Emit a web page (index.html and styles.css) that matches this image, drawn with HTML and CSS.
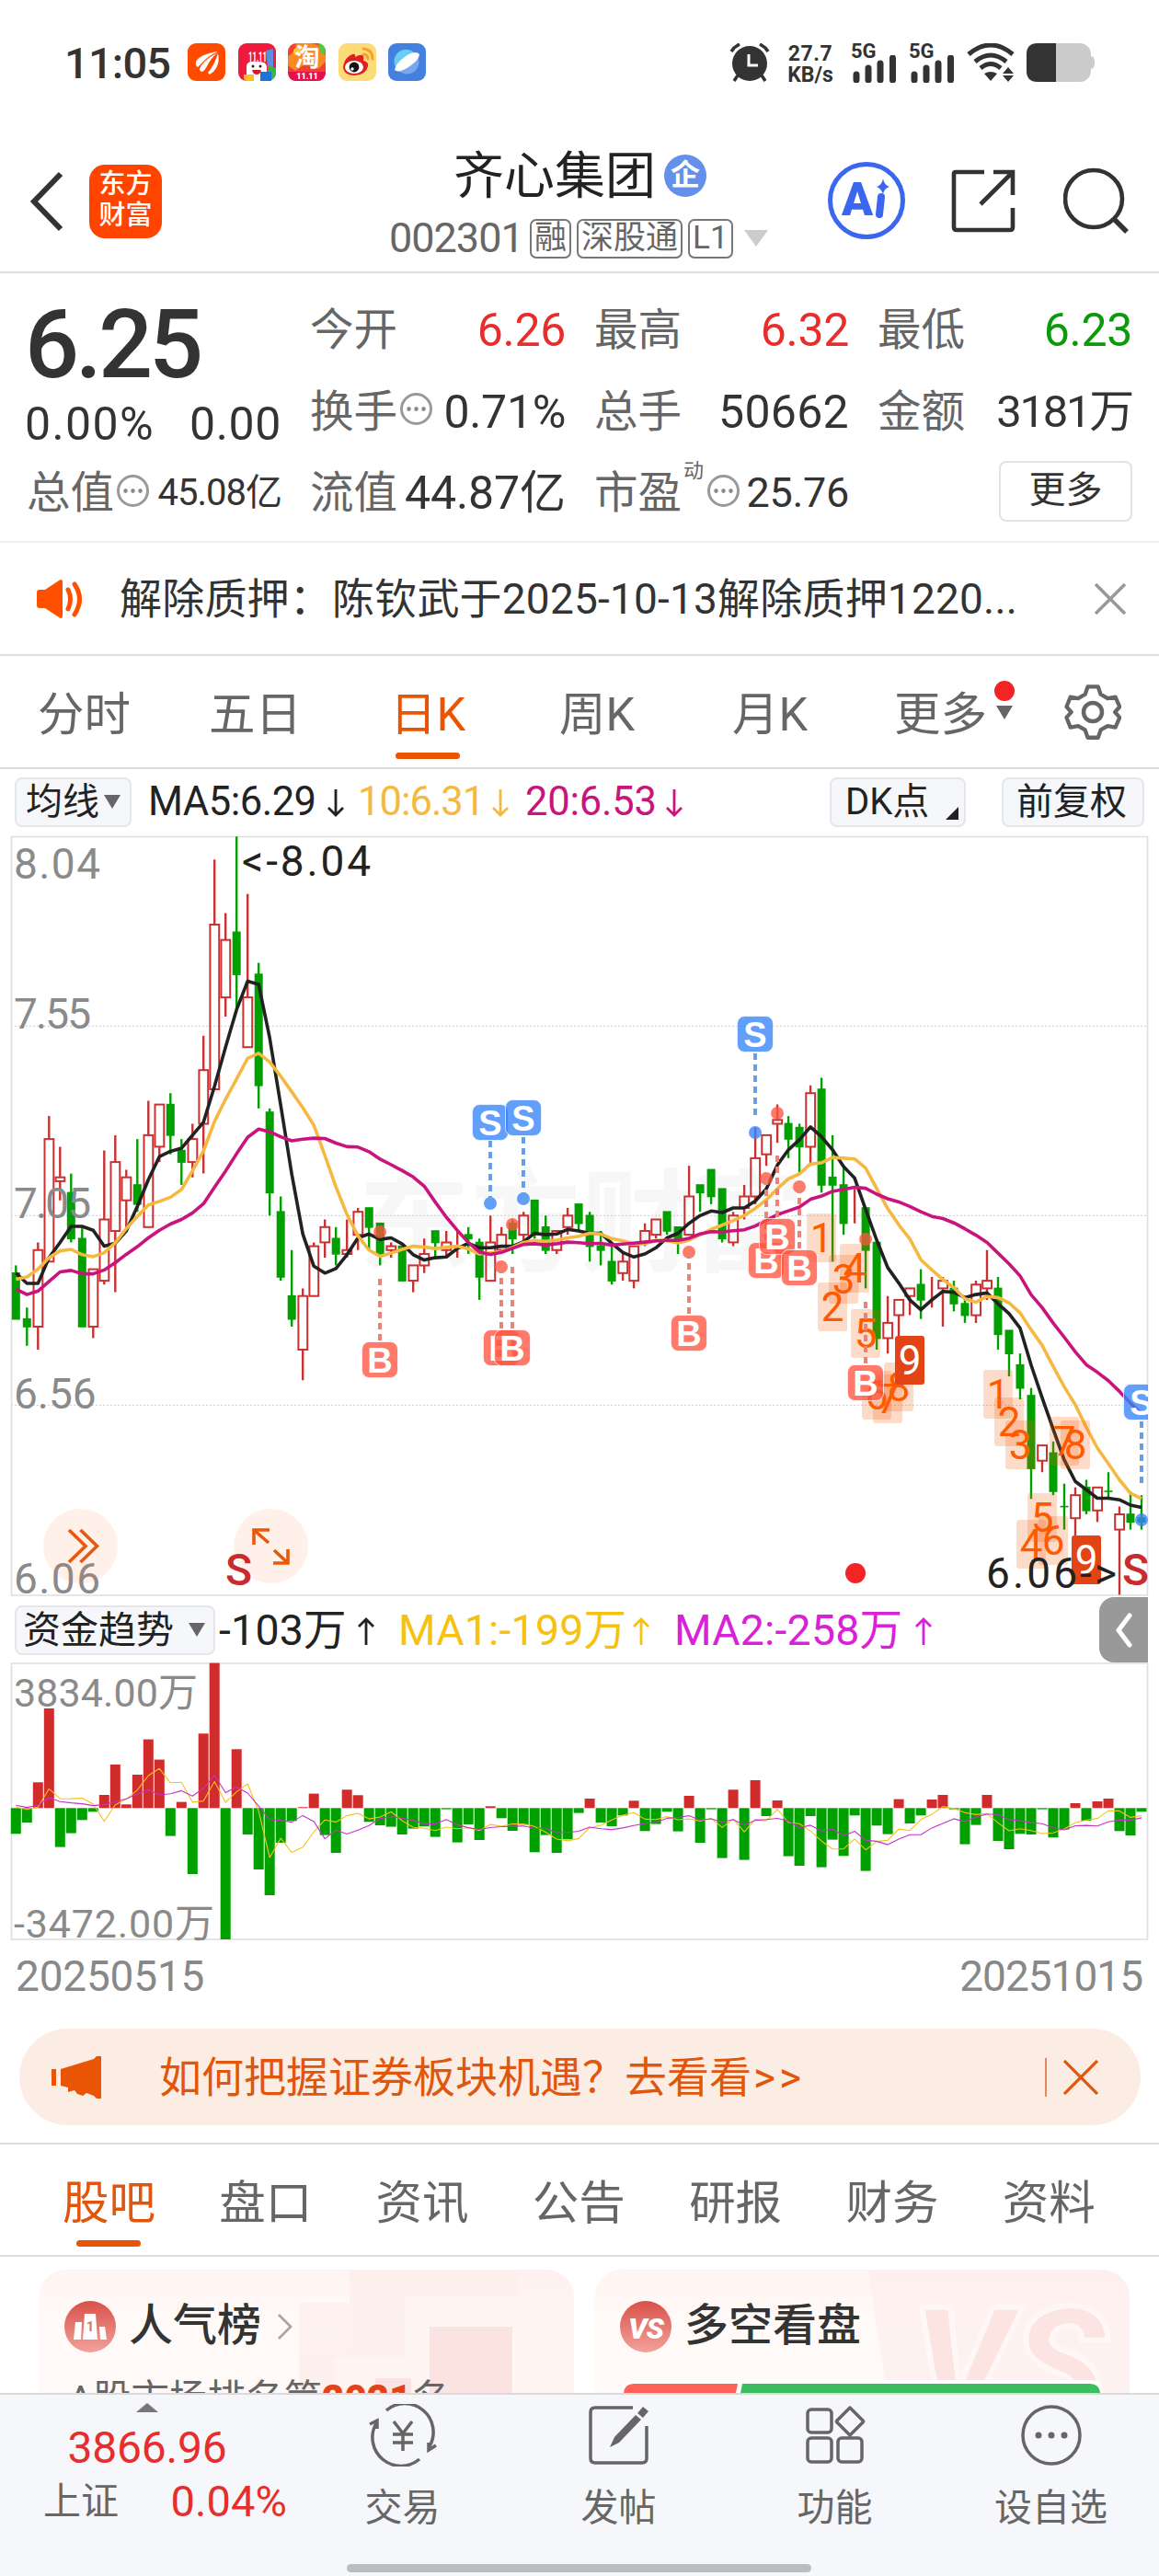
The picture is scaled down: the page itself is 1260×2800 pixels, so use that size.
FILE: index.html
```
<!DOCTYPE html>
<html lang="zh-CN">
<head>
<meta charset="utf-8">
<title>齐心集团 002301</title>
<link rel="stylesheet" href="styles.css">
</head>
<body>
<div class="screen">

  <div class="status">
    <span class="clock">11:05</span>
    <div class="apps">
      <svg viewBox="0 0 41 41"><rect width="41" height="41" rx="9" fill="#ff4a00"/><path d="M9 20Q13 12 33 9Q22 14 17 20Q14 23 11 26Q8 24 9 20ZM13 28Q16 19 32 10.500Q24 18 21 25Q19 29 16 31Q13 31 13 28ZM22 32Q29 24 33 11Q35 20 31 27Q28 32 24 34Z" fill="#fff"/></svg>
      <svg viewBox="0 0 41 41"><rect width="41" height="41" rx="9" fill="#ee1c3c"/><path d="M30 8L38 6V30L32 26Z" fill="#5b8de0"/><path d="M33 24L41 27V33Q40 39 34 41H30Z" fill="#38b54a"/><path d="M9 25Q9 19 20 20Q31 19 31 26V41H9Z" fill="#fff"/><circle cx="16" cy="25" r="1.500" fill="#222"/><circle cx="24" cy="25" r="1.500" fill="#222"/><path d="M15 29H25Q24 34 20 34Q16 34 15 29Z" fill="#d41c2c"/><path d="M6 34H17V41H9Q6 40 6 37Z" fill="#ffbf1a"/><rect x="24" y="31" width="12" height="10" fill="#1f72d8"/><text x="21" y="20" text-anchor="middle" class="tiny" textLength="20" lengthAdjust="spacingAndGlyphs">11.11</text></svg>
      <svg viewBox="0 0 41 41"><rect width="41" height="41" rx="9" fill="#f3402f"/><path d="M0 14Q8 10 9 0H26Q38 2 41 14V20L33 28L20 22L8 30L0 24Z" fill="#f98a1f"/><circle cx="10" cy="9" r="4" fill="#ffc93c"/><path d="M33 0Q41 1 41 10L36 12Z" fill="#55c840"/><path d="M0 31H41V32Q40 41 32 41H9Q1 41 0 32Z" fill="#e8104c"/><text x="21" y="25" text-anchor="middle" class="tao">淘</text><text x="21" y="39" text-anchor="middle" class="eleven">11.11</text></svg>
      <svg viewBox="0 0 41 41"><rect width="41" height="41" rx="9" fill="#fcdc78"/><path d="M5 25Q7 15 15 12Q19 11 18 15Q25 11 27 14Q28 16 27 19Q33 20 32 25Q30 34 18 35Q5 35 5 25Z" fill="#e01f22"/><ellipse cx="17" cy="26" rx="10" ry="7" fill="#fff"/><circle cx="17" cy="26" r="5.400" fill="#111"/><circle cx="15" cy="28" r="1.700" fill="#fff"/><path d="M27 6Q37 7 37 17M27 12Q32 12 32 17" fill="none" stroke="#f5a033" stroke-width="3" stroke-linecap="round"/></svg>
      <svg viewBox="0 0 41 41"><rect width="41" height="41" rx="9" fill="#4480de"/><circle cx="20.500" cy="20.500" r="13" fill="#7aa6ea"/><path d="M8 26A13 13 0 0 1 28 10Z" fill="#68cdf2"/><path d="M7 29Q8 22 19 14Q30 7 34 12Q34 18 22 26Q11 33 7 29Z" fill="#fff"/></svg>
    </div>
    <svg class="alarm" viewBox="0 0 44 42"><path d="M2 9Q5 4 11 1M42 9Q39 4 33 1M9 35L5 41M35 35L39 41" fill="none" stroke="#333" stroke-width="3.500"/><circle cx="22" cy="22" r="19" fill="#333"/><path d="M21 12V24H31" fill="none" stroke="#fff" stroke-width="3"/></svg>
    <div class="speed"><span>27.7</span><span>KB/s</span></div>
    <div class="cell"><span>5G</span><svg viewBox="0 0 48 30"><path d="M4 21V27M17 14V27M30 9V27M43.500 3V27" stroke="#333" stroke-width="7" stroke-linecap="round"/></svg></div>
    <div class="cell second"><span>5G</span><svg viewBox="0 0 48 30"><path d="M4 21V27M17 14V27M30 9V27M43.500 3V27" stroke="#333" stroke-width="7" stroke-linecap="round"/></svg></div>
    <svg class="wifi" viewBox="0 0 54 42"><path d="M2 12Q26-8 50 12M9 20Q26 6 43 20M15 27Q26 18 37 27" fill="none" stroke="#333" stroke-width="5"/><path d="M19 33Q26 29 33 33L26 41ZM39 33L45 26L51 33ZM39 35H51L45 42Z" fill="#333"/></svg>
    <svg class="battery" viewBox="0 0 74 42"><rect width="70" height="42" rx="12" fill="#cbcbcb"/><path d="M70 14Q74 14 74 21T70 28Z" fill="#cbcbcb"/><path d="M32 0H12Q0 0 0 12V30Q0 42 12 42H32Z" fill="#333"/></svg>
  </div>

  <div class="head">
    <svg class="back" viewBox="0 0 38 66"><path d="M34 3L5 33L34 63" fill="none" stroke="#333" stroke-width="6"/></svg>
    <div class="logo"><span>东方</span><span>财富</span></div>
    <div class="title">
      <div class="name">齐心集团<span class="corp">企</span></div>
      <div class="code"><span class="num">002301</span><span class="tag">融</span><span class="tag">深股通</span><span class="tag">L1</span><i class="caret"></i></div>
    </div>
    <svg class="ai" viewBox="0 0 84 84"><circle cx="42" cy="42" r="39.500" fill="none" stroke="#3a66f0" stroke-width="5"/><text x="15" y="58" class="ai-a">A</text><path d="M58 38L56 57" stroke="#3a66f0" stroke-width="8" stroke-linecap="round"/><path d="M60 18Q61 25 67 27Q61 29 60 35Q58 29 53 27Q59 25 60 18Z" fill="#3a66f0"/></svg>
    <svg class="share" viewBox="0 0 70 70"><path d="M36 3H5Q3 3 3 5V63Q3 66 6 66H64Q67 66 67 63V42M46 3H67V28M67 3L32 38" fill="none" stroke="#333" stroke-width="4.600"/></svg>
    <svg class="search" viewBox="0 0 72 72"><circle cx="33" cy="34" r="31" fill="none" stroke="#333" stroke-width="4.600"/><path d="M55 56L69 70" stroke="#333" stroke-width="5.500"/></svg>
  </div>

  <div class="quote">
    <div class="col first">
      <div class="price">6.25</div>
      <div class="chg"><span>0.00%</span><span>0.00</span></div>
      <div class="cellrow"><label>总值</label><i class="info"></i><b class="small">45.08亿</b></div>
    </div>
    <div class="col">
      <div class="cellrow"><label>今开</label><b class="red">6.26</b></div>
      <div class="cellrow"><label>换手</label><i class="info"></i><b>0.71%</b></div>
      <div class="cellrow"><label>流值</label><b class="mid">44.87亿</b></div>
    </div>
    <div class="col">
      <div class="cellrow"><label>最高</label><b class="red">6.32</b></div>
      <div class="cellrow"><label>总手</label><b class="vol">50662</b></div>
      <div class="cellrow"><label>市盈</label><sup>动</sup><i class="info"></i><b class="pe">25.76</b></div>
    </div>
    <div class="col">
      <div class="cellrow"><label>最低</label><b class="green">6.23</b></div>
      <div class="cellrow"><label>金额</label><b class="amt">3181万</b></div>
      <div class="cellrow end"><span class="more">更多</span></div>
    </div>
  </div>

  <div class="notice">
    <svg class="speaker" viewBox="0 0 52 44"><path d="M3 12Q0 12 0 15V29Q0 32 3 32H9L24 42Q28 45 28 40V4Q28-1 24 2L9 12Z" fill="#ff5000"/><path d="M34 12Q39 22 34 33M41 6Q52 22 41 39" fill="none" stroke="#ff5000" stroke-width="5" stroke-linecap="round"/></svg>
    <span class="notice-text">解除质押：陈钦武于2025-10-13解除质押1220...</span>
    <svg class="close" viewBox="0 0 34 34"><path d="M1 1L33 33M33 1L1 33" stroke="#999" stroke-width="3.600"/></svg>
  </div>

  <div class="periods">
    <span>分时</span><span>五日</span><span class="on">日K</span><span>周K</span><span>月K</span>
    <span class="more-tab">更多<i class="dot"></i><i class="caret dark"></i></span>
    <svg class="gear" viewBox="0 0 62 62"><path d="M25 2.500H37L40 11L48 15.500L57 14L62 25L56.500 31L62 37L57 48L48 46.500L40 51L37 59.500H25L22 51L14 46.500L5 48L0.500 37L6 31L0.500 25L5 14L14 15.500L22 11Z" fill="none" stroke="#666" stroke-width="4.500" stroke-linejoin="round" transform="translate(2 1) scale(.94 .97)"/><circle cx="31" cy="31" r="10" fill="none" stroke="#666" stroke-width="4.500"/></svg>
  </div>

  <div class="ma">
    <span class="pill avg">均线<i class="caret dark"></i></span>
    <span class="val ma5">MA5:6.29</span><svg class="arr" viewBox="0 0 18 30"><path d="M9 0V28M1 20L9 28L17 20" fill="none" stroke="#222" stroke-width="2.800"/></svg>
    <span class="val ma10">10:6.31</span><svg class="arr" viewBox="0 0 18 30"><path d="M9 0V28M1 20L9 28L17 20" fill="none" stroke="#f5b942" stroke-width="2.800"/></svg>
    <span class="val ma20">20:6.53</span><svg class="arr" viewBox="0 0 18 30"><path d="M9 0V28M1 20L9 28L17 20" fill="none" stroke="#c9147d" stroke-width="2.800"/></svg>
    <span class="pill dk">DK点<i class="corner"></i></span>
    <span class="pill fq">前复权</span>
  </div>

  <svg id="kline" class="kline" viewBox="0 904 1260 832"></svg>

  <div class="trend">
    <span class="pill fund">资金趋势<i class="caret dark"></i></span>
    <span class="val t0">-103万</span><svg class="arr" viewBox="0 0 18 30"><path d="M9 30V2M1 10L9 2L17 10" fill="none" stroke="#222" stroke-width="2.800"/></svg>
    <span class="val t1">MA1:-199万</span><svg class="arr" viewBox="0 0 18 30"><path d="M9 30V2M1 10L9 2L17 10" fill="none" stroke="#f5c211" stroke-width="2.800"/></svg>
    <span class="val t2">MA2:-258万</span><svg class="arr" viewBox="0 0 18 30"><path d="M9 30V2M1 10L9 2L17 10" fill="none" stroke="#d822d8" stroke-width="2.800"/></svg>
    <span class="handle"><svg viewBox="0 0 20 38"><path d="M16 3L4 19L16 35" fill="none" stroke="#fff" stroke-width="5" stroke-linecap="round" stroke-linejoin="round"/></svg></span>
  </div>

  <svg id="flow" class="flow" viewBox="0 1807 1260 303"></svg>

  <div class="dates"><span>20250515</span><span class="to">20251015</span></div>

  <div class="banner">
    <svg class="horn" viewBox="0 0 54 46"><path d="M0 14H5V32H0ZM10 14L46 3L49 0H54V46H49L46 43L38 40L34 43L28 41L25 37L18 39V34L10 32Z" fill="#e95504"/></svg>
    <span class="banner-text">如何把握证券板块机遇？去看看<span class="gt">&gt;&gt;</span></span>
    <i class="bar"></i>
    <svg class="bclose" viewBox="0 0 38 38"><path d="M1 1L37 37M37 1L1 37" stroke="#e0560c" stroke-width="3.200"/></svg>
  </div>

  <div class="tabs">
    <span class="on">股吧</span><span>盘口</span><span>资讯</span><span>公告</span><span>研报</span><span>财务</span><span>资料</span>
  </div>

  <div class="cards">
    <div class="card">
      <svg class="deco" viewBox="0 0 582 134"><path d="M338 0H582V134H517V68H433V134H283V88H338Z" fill="#fdeeec" opacity=".45"/><path d="M283 36H338V0H520V28H398V96H322V134H283Z" fill="#fdeeec" opacity=".7"/><path d="M425 62H515V134H425Z" fill="#fbe3e1"/><path d="M366 118H405V134H366Z" fill="#fbe3e1"/></svg>
      <div class="card-head">
        <svg class="ic" viewBox="0 0 56 56"><defs><linearGradient id="g1" x1="0" y1="0" x2="0" y2="1"><stop offset="0" stop-color="#d9514a"/><stop offset="1" stop-color="#f2a29b"/></linearGradient></defs><circle cx="28" cy="28" r="28" fill="url(#g1)"/><path d="M12 23H19L18 42H10ZM22 14H34L36 42H20ZM38 28H44L46 42H39Z" fill="#fff"/><text x="28" y="33" text-anchor="middle" class="one">1</text></svg>
        <span>人气榜</span>
        <svg class="go" viewBox="0 0 18 28"><path d="M2 1L15 14L2 27" fill="none" stroke="#aaa4a2" stroke-width="2.800"/></svg>
      </div>
      <div class="rank">A股市场排名第<em>2021</em>名</div>
    </div>
    <div class="card">
      <svg class="deco" viewBox="0 0 582 134"><path d="M298 0H582V134H318Z" fill="#fdeeec" opacity=".7"/><text x="345" y="162" class="vs-bg">VS</text></svg>
      <div class="card-head">
        <svg class="ic" viewBox="0 0 56 56"><circle cx="28" cy="28" r="28" fill="url(#g1)"/><text x="28" y="41" text-anchor="middle" class="vs">VS</text></svg>
        <span>多空看盘</span>
      </div>
      <svg class="ratio" viewBox="0 0 524 14"><path d="M0 14Q2 0 14 0H510Q522 0 524 14Z" fill="#fff"/><path d="M3 14Q4 4 14 4H127L125 14Z" fill="#ff6257"/><path d="M132 4H510Q520 4 521 14H130Z" fill="#3bbd60"/></svg>
    </div>
  </div>

  <div class="nav">
    <div class="index">
      <i class="up"></i>
      <span class="idx">3866.96</span>
      <div class="idx-row"><span>上证</span><b>0.04%</b></div>
    </div>
    <div class="item"><svg viewBox="0 0 76 68"><path d="M20 7A31 31 0 0 1 67 46M56 60A31 31 0 0 1 9 21M2 22L10 18V27M74 45L66 50V42" fill="none" stroke="#666" stroke-width="3.500"/><path d="M28 19L38 32L48 19M38 32V51M27 33H49M27 42H49" fill="none" stroke="#666" stroke-width="3.500"/></svg><span>交易</span></div>
    <div class="item"><svg viewBox="0 0 76 68"><path d="M53 4H12Q7 4 7 9V59Q7 64 12 64H63Q68 64 68 59V24" fill="none" stroke="#666" stroke-width="3.500"/><path d="M58 10L64 3L70 8L64 15ZM56 12L62 17L38 42L28 47L33 36Z" fill="#666"/></svg><span>发帖</span></div>
    <div class="item"><svg viewBox="0 0 76 68"><g fill="none" stroke="#666" stroke-width="3.500"><rect x="8" y="6" width="26" height="25" rx="4"/><rect x="8" y="37" width="26" height="26" rx="4"/><rect x="41" y="37" width="26" height="26" rx="4"/><path d="M54 4L68 18Q69 19 68 20L54 34L40 20Q39 19 40 18Z" stroke-linejoin="round"/></g></svg><span>功能</span></div>
    <div class="item"><svg viewBox="0 0 76 68"><circle cx="38" cy="34" r="31" fill="none" stroke="#666" stroke-width="3.500"/><circle cx="24" cy="34" r="3.500" fill="#666"/><circle cx="38" cy="34" r="3.500" fill="#666"/><circle cx="52" cy="34" r="3.500" fill="#666"/></svg><span>设自选</span></div>
    <i class="homebar"></i>
  </div>
</div>
<script src="chart.js"></script>
</body>
</html>
```
FILE: styles.css
```
* { box-sizing: border-box; }
body {
  margin: 0;
  background: #fff;
  color: #333;
  font-family: Roboto, "Noto Sans CJK SC", sans-serif;
}
i, em { font-style: normal; }
svg { display: block; flex: none; }
.screen {
  width: 1260px;
  height: 2800px;
  overflow: hidden;
  display: flex;
  flex-direction: column;
}
.screen > * { flex: none; }

/* status bar */
.status { height: 130px; padding: 47px 70px 0 70px; display: flex; align-items: flex-start; }
.clock { width: 134px; font-size: 47px; line-height: 44px; font-weight: 500; letter-spacing: -.8px; }
.apps { display: flex; gap: 13.6px; width: 589px; }
.apps svg { width: 41px; height: 41px; }
.tiny { font: 700 15px Roboto, sans-serif; fill: #fff; }
.tao { font: 700 27px "Noto Sans CJK SC", sans-serif; fill: #fff; }
.eleven { font: 900 9px Roboto, sans-serif; fill: #fff; }
.alarm { width: 44px; height: 42px; }
.speed { width: 52px; margin-left: 18px; display: flex; flex-direction: column; align-items: center; font-size: 23px; line-height: 23px; font-weight: 700; white-space: nowrap; }
.speed span:first-child { letter-spacing: .5px; }
.cell { width: 50px; margin-left: 18px; height: 42px; position: relative; }
.cell.second { margin-left: 13px; }
.cell span { position: absolute; left: 0; top: -1px; font-size: 22px; line-height: 20px; font-weight: 700; }
.cell svg { position: absolute; left: 2px; bottom: -1px; width: 48px; height: 30px; }
.wifi { width: 54px; height: 42px; margin-left: 13px; }
.battery { width: 74px; height: 42px; margin-left: 11px; }

/* title bar */
.head { height: 167px; border-bottom: 2px solid #ddd; padding: 0 32px 0 32px; display: flex; align-items: flex-start; }
.back { width: 38px; height: 66px; margin-top: 56px; }
.logo { width: 79px; height: 80px; margin: 49px 0 0 27px; border-radius: 17px; background: #ff4400; color: #fff; font-size: 29px; line-height: 34px; font-weight: 500; padding-top: 4px; display: flex; flex-direction: column; align-items: center; }
.title { width: 724px; height: 165px; padding: 28px 0 0 317px; white-space: nowrap; }
.name { font-size: 55px; line-height: 66px; display: flex; align-items: center; color: #222; }
.corp { width: 46px; height: 46px; margin-left: 9px; border-radius: 50%; background: #6390e8; color: #fff; font-size: 32px; line-height: 44px; font-weight: 700; text-align: center; }
.code { display: flex; align-items: center; height: 44px; margin: 13px 0 0 -70px; color: #666; }
.num { font-size: 45px; line-height: 44px; letter-spacing: -1px; width: 153px; }
.tag { border: 2px solid #777; border-radius: 7px; height: 43px; line-height: 38px; font-size: 35px; padding: 0 3px; margin-right: 6px; }
.caret { width: 0; height: 0; border: 13px solid transparent; border-top: 18px solid #ccc; border-bottom: 0; }
.code .caret { margin-left: 6px; }
.ai { width: 84px; height: 84px; margin-top: 46px; }
.ai-a { font: 900 50px Roboto, sans-serif; fill: #3a66f0; }
.share { width: 70px; height: 70px; margin: 54px 0 0 50px; }
.search { width: 72px; height: 72px; margin: 52px 0 0 52px; }

/* quote block */
.quote { height: 293px; border-bottom: 2px solid #eee; padding: 18px 29px 0 29px; display: grid; grid-template-columns: 277px 278px 277px 277px; gap: 31px; }
.col { display: flex; flex-direction: column; }
.cellrow { height: 88.500px; display: flex; align-items: center; white-space: nowrap; }
.cellrow label { font-size: 47.500px; line-height: 60px; color: #666; width: 95px; }
.cellrow b { margin-left: auto; font-weight: 400; font-size: 50px; line-height: 60px; letter-spacing: -.3px; }
.cellrow b.red { color: #e62e2e; }
.cellrow b.green { color: #0a9a0a; }
.cellrow b.small { font-size: 40px; letter-spacing: -1px; }
.cellrow b.mid { font-size: 50px; letter-spacing: -.1px; }
.cellrow b.vol { letter-spacing: .3px; }
.cellrow b.pe { font-size: 45px; }
.cellrow b.amt { letter-spacing: -2.300px; font-size: 49px; }
.cellrow sup { font-size: 22px; line-height: 24px; color: #666; align-self: flex-start; margin: 8px 0 0 2px; width: 23px; }
.info { width: 35px; height: 35px; margin: -6px 0 0 3px; border: 3px solid #999; border-radius: 50%; background: radial-gradient(circle, #888 2px, transparent 2.600px) 2.500px 0 / 8px 29px repeat-x; background-clip: content-box; padding: 0 2px; }
.cellrow.end { justify-content: flex-end; }
.more { width: 145px; height: 66px; margin-bottom: 4px; border: 2px solid #e3e3e3; border-radius: 8px; font-size: 40px; line-height: 60px; text-align: center; }
.price { height: 115px; margin-left: -2px; font-size: 104px; line-height: 120px; font-weight: 500; letter-spacing: -4px; }
.chg { height: 62px; margin-left: -2px; display: flex; justify-content: space-between; font-size: 50px; line-height: 62px; letter-spacing: .6px; }
.chg span:first-child { letter-spacing: 1.400px; }

/* notice */
.notice { height: 123px; border-bottom: 2px solid #ddd; padding: 0 36px 0 40px; display: flex; align-items: center; }
.speaker { width: 52px; height: 44px; }
.notice-text { width: 1060px; margin-left: 38px; font-size: 46px; line-height: 60px; white-space: nowrap; letter-spacing: .2px; }
.close { width: 34px; height: 34px; }

/* period tabs */
.periods { height: 123px; border-bottom: 2px solid #ddd; padding: 0 40px 0 41px; display: flex; font-size: 50.500px; line-height: 128px; color: #666; white-space: nowrap; }
.periods > span { width: 186px; position: relative; }
.periods > span:nth-child(2) { width: 197px; }
.periods > span:nth-child(3) { width: 184px; }
.periods > span:nth-child(4) { width: 188px; }
.periods > span:nth-child(5) { width: 176px; }
.periods .on { color: #e95504; }
.periods .on::after { content: ""; position: absolute; left: 6px; bottom: 9px; width: 70px; height: 7px; border-radius: 4px; background: #e95504; }
.periods .more-tab { width: 185px; }
.dot { position: absolute; left: 109px; top: 27px; width: 22px; height: 22px; border-radius: 50%; background: #f22424; }
.caret.dark { border-width: 15px 9px 0; border-color: #666 transparent transparent; }
.periods .caret { position: absolute; left: 111px; top: 54px; }
.gear { width: 62px; height: 62px; margin-top: 30px; }

/* moving average row */
.ma { height: 68px; padding: 3px 16px 0 16px; display: flex; align-items: center; white-space: nowrap; }
.pill { height: 54px; border: 2px solid #e4e6ea; border-radius: 8px; background: #f6f7fa; color: #222; font-size: 40px; line-height: 48px; display: flex; align-items: center; position: relative; }
.avg { width: 127px; padding-left: 10px; gap: 5px; }
.val { font-size: 43.500px; line-height: 50px; letter-spacing: -.5px; }
.arr { width: 18px; height: 30px; margin-top: 3px; }
.ma5 { width: 195px; margin-left: 18px; color: #222; }
.ma10 { width: 146px; margin-left: 15px; color: #f5b942; letter-spacing: -1px; }
.ma20 { width: 153px; margin-left: 18px; color: #c9147d; letter-spacing: -.2px; }
.dk { width: 148px; margin-left: auto; padding-left: 15px; }
.corner { width: 0; height: 0; border-left: 14px solid transparent; border-bottom: 14px solid #222; position: absolute; right: 6px; bottom: 6px; }
.fq { width: 155px; margin-left: 39px; padding-left: 14px; }

/* charts */
.kline { width: 1260px; height: 832px; }
.flow { width: 1260px; height: 303px; }
.axis { font-size: 46px; fill: #8a8a8a; }
.axis.sm { font-size: 43px; }
.mark { font-size: 46px; fill: #222; }
.sig { font-size: 48px; font-weight: 500; fill: #c92c2c; }
.bs { font: 700 38px "Liberation Sans", sans-serif; fill: #fff; text-anchor: middle; }
.td { font-size: 44px; fill: #ff5a00; text-anchor: middle; }
.td.hot { fill: #fff; }
.wm { font-size: 121px; font-weight: 700; fill: #f7f7f7; }

/* fund trend row */
.trend { height: 71px; padding: 0 12px 0 16px; display: flex; align-items: center; white-space: nowrap; }
.trend .val { font-size: 46.500px; letter-spacing: .2px; }
.fund { width: 218px; padding-left: 7px; gap: 16px; font-size: 41px; }
.trend .t0 { width: 151px; margin-left: 4px; color: #222; }
.trend .t1 { width: 255px; margin-left: 26px; color: #f5c211; }
.trend .t2 { width: 262px; margin-left: 27px; color: #d822d8; }
.handle { width: 53px; height: 71px; margin-left: auto; border-radius: 16px 0 0 16px; background: #999; display: flex; align-items: center; justify-content: center; }
.handle svg { width: 20px; height: 38px; }
.dates { height: 95px; padding: 9px 18px 0 17px; display: flex; justify-content: space-between; font-size: 46px; line-height: 58px; letter-spacing: -.2px; color: #888; }
.dates .to { letter-spacing: -1px; }

/* banner */
.banner { height: 105px; margin: 0 20px 0 21px; padding: 0 45px 0 35px; border-radius: 53px; background: #fcede4; color: #e0560c; display: flex; align-items: center; }
.horn { width: 54px; height: 46px; }
.banner-text { margin-left: 63px; width: 963px; font-size: 46px; line-height: 60px; white-space: nowrap; }
.gt { letter-spacing: 4px; margin-left: 2px; }
.bar { width: 2px; height: 42px; background: #e58a57; }
.bclose { width: 38px; height: 38px; margin-left: 18px; }

/* content tabs */
.tabs { height: 124px; margin-top: 19px; border-top: 2px solid #ddd; border-bottom: 2px solid #ddd; padding-left: 68px; display: flex; font-size: 50.500px; line-height: 127px; color: #666; }
.tabs span { width: 170.600px; position: relative; }
.tabs .on { color: #e0560c; }
.tabs .on::after { content: ""; position: absolute; left: 15px; bottom: 9px; width: 70px; height: 7px; border-radius: 4px; background: #e95504; }

/* cards */
.cards { height: 148px; padding: 14px 32px 0 42px; display: flex; gap: 22px; overflow: hidden; }
.card { width: 582px; height: 200px; border-radius: 30px; background: linear-gradient(#fff5f2, #fffaf8 60px); position: relative; overflow: hidden; flex: none; }
.deco { position: absolute; left: 0; top: 0; width: 582px; height: 134px; }
.card-head { position: relative; height: 124px; padding-left: 28px; display: flex; align-items: center; font-size: 48px; line-height: 60px; font-weight: 500; color: #333; }
.card-head span { margin-top: -3px; }
.ic { width: 56px; height: 56px; margin-right: 14px; }
.one { font: 700 15px Roboto, sans-serif; fill: #e0736b; }
.vs { font: italic 900 32px Roboto, sans-serif; fill: #fff; letter-spacing: -1px; }
.vs-bg { font: italic 900 170px Roboto, sans-serif; fill: #fbe4e1; stroke: #fff7f5; stroke-width: 6px; }
.go { width: 18px; height: 28px; margin-left: 17px; }
.rank { position: relative; margin: -7px 0 0 32px; font-size: 41.500px; line-height: 48px; color: #666; white-space: nowrap; }
.rank em { font-weight: 900; color: #e2441a; font-size: 42px; }
.ratio { position: relative; width: 524px; height: 14px; margin: -4px 0 0 29px; }

/* bottom bar */
.nav { height: 199px; border-top: 2px solid #d8dade; background: #f6f7fa; display: grid; grid-template-columns: 320px 235px 235px 235px 235px; position: relative; color: #666; }
.index { display: flex; flex-direction: column; align-items: center; }
.up { border: 12px solid transparent; border-bottom: 10px solid #777; border-top: 0; margin-top: 9px; }
.idx { font-size: 48px; line-height: 60px; margin-top: 9px; color: #e62e2e; letter-spacing: -.2px; }
.idx-row { width: 265px; display: flex; justify-content: space-between; font-size: 41px; line-height: 58px; margin: -1px 0 0 39px; }
.idx-row b { font-weight: 400; font-size: 47px; letter-spacing: .1px; color: #e62e2e; }
.item { display: flex; flex-direction: column; align-items: center; padding-top: 10px; font-size: 41px; line-height: 60px; }
.item svg { width: 76px; height: 68px; margin-bottom: 15px; }
.homebar { position: absolute; left: 377px; bottom: 4px; width: 505px; height: 9px; border-radius: 5px; background: #bcbdbf; }
```
FILE: chart.js
```
// [direction, high, body top, body bottom, low] per trading day
const days = [
['G',6.92,6.90,6.78,6.78],['G',6.81,6.78,6.76,6.71],['R',6.98,6.96,6.76,6.70],['R',7.31,7.25,6.93,6.93],
['R',7.23,7.15,7.14,7.09],['G',7.16,7.11,6.99,6.98],['G',7.02,6.99,6.76,6.76],['R',6.91,6.91,6.76,6.73],
['R',7.22,7.04,6.88,6.87],['R',7.26,7.19,7.01,6.85],['R',7.17,7.15,7.09,7.01],['G',7.25,7.13,7.08,7.06],
['R',7.35,7.26,7.02,7.02],['R',7.34,7.34,7.23,7.19],['G',7.37,7.34,7.26,7.21],['G',7.25,7.22,7.19,7.13],
['R',7.29,7.25,7.19,7.15],['R',7.52,7.43,7.29,7.16],['R',7.98,7.81,7.38,7.38],['R',7.84,7.77,7.62,7.57],
['G',8.04,7.79,7.68,7.59],['R',7.89,7.62,7.49,7.49],['G',7.71,7.68,7.39,7.33],['G',7.33,7.32,7.11,7.05],
['G',7.10,7.06,6.89,6.88],['G',6.96,6.84,6.78,6.76],['R',6.86,6.84,6.70,6.62],['R',6.98,6.97,6.84,6.84],
['R',7.04,7.02,6.98,6.94],['G',7.02,6.99,6.95,6.92],['R',7.04,6.96,6.95,6.94],['R',7.07,7.06,7.00,6.96],
['G',7.07,7.07,7.02,6.96],['G',7.03,7.03,6.95,6.92],['R',6.98,6.97,6.96,6.94],['G',6.97,6.97,6.88,6.88],
['R',6.92,6.92,6.88,6.85],['R',6.99,6.95,6.92,6.90],['G',7.01,7.01,6.98,6.94],['R',7.01,6.98,6.96,6.94],
['R',7.01,6.99,6.99,6.94],['G',7.02,7.00,6.99,6.95],['G',6.99,6.98,6.89,6.83],['R',7.05,6.98,6.88,6.88],
['R',7.02,7.00,6.96,6.96],['G',7.04,7.03,6.99,6.95],['R',7.06,7.05,7.00,6.98],['G',7.09,7.09,7.00,6.99],
['G',7.05,7.02,6.96,6.95],['R',7.01,7.01,6.96,6.95],['R',7.07,7.05,7.02,7.00],['G',7.08,7.08,7.03,7.01],
['G',7.06,7.05,6.97,6.93],['G',7.01,6.97,6.96,6.92],['G',6.97,6.93,6.88,6.87],['R',6.95,6.93,6.90,6.88],
['R',6.97,6.97,6.88,6.86],['R',7.03,7.01,6.98,6.97],['R',7.04,7.04,7.00,6.99],['G',7.06,7.06,7.01,7.00],
['G',7.02,7.02,6.99,6.95],['R',7.18,7.10,7.00,7.00],['G',7.13,7.13,7.11,7.06],['G',7.17,7.17,7.10,7.08],
['G',7.12,7.12,6.99,6.98],['R',7.06,7.05,6.98,6.97],['R',7.13,7.10,7.07,7.04],['R',7.28,7.20,7.10,7.08],
['R',7.26,7.26,7.21,7.18],['R',7.34,7.30,7.29,7.24],['G',7.31,7.29,7.25,7.20],['G',7.29,7.28,7.23,7.16],
['R',7.39,7.37,7.23,7.18],['G',7.41,7.38,7.13,7.11],['G',7.26,7.15,7.13,6.93],['G',7.18,7.13,7.03,7.00],
['R',7.12,7.08,7.08,7.03],['G',7.07,7.07,6.96,6.86],['G',6.98,6.98,6.73,6.70],['R',6.84,6.77,6.73,6.69],
['R',6.83,6.83,6.79,6.70],['R',6.86,6.86,6.84,6.79],['G',6.91,6.87,6.83,6.78],['R',6.89,6.86,6.86,6.81],
['R',6.89,6.88,6.86,6.76],['G',6.88,6.86,6.82,6.80],['G',6.84,6.82,6.79,6.77],['R',6.88,6.87,6.79,6.77],
['R',6.96,6.88,6.86,6.83],['G',6.89,6.86,6.74,6.70],['G',6.75,6.75,6.69,6.63],['G',6.69,6.66,6.60,6.57],
['G',6.60,6.58,6.39,6.31],['R',6.45,6.45,6.41,6.38],['G',6.46,6.43,6.33,6.32],['G',6.35,6.29,6.29,6.23],
['R',6.34,6.32,6.26,6.20],['G',6.36,6.34,6.28,6.27],['R',6.34,6.34,6.28,6.25],['G',6.38,6.33,6.33,6.31],
['R',6.29,6.27,6.23,6.06],['G',6.33,6.27,6.25,6.23],['G',6.32,6.26,6.25,6.23]];

// Leading averages that depend on days before the visible window
const lead5 = [6.90,6.873,6.873,6.94];
const lead10 = [6.884,6.89,6.91,6.94,6.958,6.962,6.948,6.943,6.953];
const lead20 = [6.858,6.844,6.853,6.878,6.903,6.907,6.898,6.898,6.908,6.927,6.949,6.969,6.992,7.012,7.028,7.040,7.057,7.081,7.124];

const X = i => 17.3 + i * 11.997;
const Y = p => 909.3 + (8.04 - p) * 416.2;
const f = n => n.toFixed(1);
const closes = days.map(d => d[0] === 'G' ? d[3] : d[2]);
const average = (src, n, lead) => src.map((_, i) =>
  i < n - 1 ? lead[i] : src.slice(i - n + 1, i + 1).reduce((a, b) => a + b, 0) / n);
const line = (vals, y, color, w) =>
  `<polyline points="${vals.map((v, i) => f(X(i)) + ',' + f(y(v))).join(' ')}" fill="none" stroke="${color}" stroke-width="${w}" stroke-linejoin="round"/>`;

let s = '';
s += '<text x="390" y="1372" class="wm">东方财富</text>';
[7.545, 7.05, 6.555].forEach(p => s += `<path d="M12 ${f(Y(p))}H1247" stroke="#ccc" stroke-width="1" stroke-dasharray="2 2"/>`);
s += '<path d="M12.500 909.500H1247.500V1734H12.500Z" fill="none" stroke="#dedede" stroke-width="1.600"/>';

days.forEach(([c, h, t, b, l], i) => {
  const x = X(i), yt = Y(t), yb = Y(b);
  if (c === 'G') {
    s += `<path d="M${f(x)} ${f(Y(h))}V${f(Y(l))}" stroke="#00a000" stroke-width="2.400"/>`;
    s += `<rect x="${f(x - 4.5)}" y="${f(yt - .8)}" width="9" height="${f(yb - yt + 1.6)}" fill="#00a000"/>`;
  } else {
    s += `<path d="M${f(x)} ${f(Y(h))}V${f(yt)}M${f(x)} ${f(yb)}V${f(Y(l))}" stroke="#c83232" stroke-width="2.400"/>`;
    s += `<rect x="${f(x - 4.8)}" y="${f(yt)}" width="9.800" height="${f(yb - yt)}" fill="none" stroke="#c83232" stroke-width="2"/>`;
  }
});
s += line(average(closes, 5, lead5), Y, '#222', 3.6);
s += line(average(closes, 10, lead10), Y, '#f5b942', 3.6);
s += line(average(closes, 20, lead20), Y, '#c9147d', 3.6);

[['8.04', 955], ['7.55', 1118], ['7.05', 1324], ['6.56', 1531], ['6.06', 1732]].forEach(([t, y]) =>
  s += `<text x="15" y="${y}" class="axis"${t[0] === '7' ? ' textLength="84"' : t === '6.06' || t === '8.04' ? ' textLength="94"' : ''}>${t}</text>`);
s += '<text x="263" y="952" class="mark" textLength="140">&lt;-8.04</text>';

// Sequence counters: [digit, centre x, centre y]
[[1,893,1345],[2,905,1420],[3,917,1390],[4,929,1378],[5,941,1449],[6,953,1516],[7,965,1520],[8,977,1507],[9,989,1478],
 [1,1085,1515],[2,1097,1545],[3,1109,1570],[4,1121,1678],[5,1133,1649],[6,1145,1674],[7,1157,1566],[8,1169,1570],[9,1181,1695]]
.forEach(([n, x, y]) => {
  const hot = n === 9;
  s += `<rect x="${x - 16}" y="${y - 26}" width="32" height="53" rx="3" fill="${hot ? '#e24416' : 'rgba(245,90,10,.22)'}"/>`;
  s += `<text x="${x}" y="${y + 16}" class="td${hot ? ' hot' : ''}">${n}</text>`;
});

// Trade markers: [letter, x, badge y, dot y, dash start, dash end]
[['B',413,1478,1339,1390,1457],['B',545,1465,1377,1377,1444],['B',557,1465,1331,1377,1444],['B',749,1449,1361,1361,1428],
 ['B',833,1370,1281,1281,1348],['B',845,1344,1210,1256,1323],['B',869,1378,1290,1290,1357],['B',941,1503,1347,1415,1482],
 ['S',533,1220,1308,1308,1240],['S',569,1215,1303,1303,1236],['S',821,1124,1231,1212,1145],['S',1241,1524,1652,1612,1545]]
.forEach(([k, x, y, dot, a, b]) => {
  const fill = k === 'B' ? '#ff5440' : '#3484fa', dash = k === 'B' ? '#e8837a' : '#669fe6';
  s += `<circle cx="${x}" cy="${dot}" r="7" fill="${fill}" fill-opacity=".78"/>`;
  s += `<path d="M${x} ${b}V${a}" stroke="${dash}" stroke-width="4" stroke-dasharray="7 5"/>`;
  s += `<svg x="0" y="904" width="1248" height="832" viewBox="0 904 1248 832"><rect x="${x - 19.5}" y="${y - 19.5}" width="39" height="39" rx="8" fill="${fill}" fill-opacity=".78" stroke="#fff" stroke-opacity=".7"/>`;
  s += `<text x="${x}" y="${y + 13.5}" class="bs">${k}</text></svg>`;
});

s += '<circle cx="930" cy="1710" r="11" fill="#f22424"/>';
s += '<text x="1072" y="1726" class="mark" textLength="142">6.06-&gt;</text>';
s += '<svg x="0" y="904" width="1248" height="832" viewBox="0 904 1248 832"><text x="1220" y="1723" class="sig">S</text></svg>';

// Floating chart controls
s += '<circle cx="87.500" cy="1680.500" r="40.500" fill="#ff7a33" fill-opacity=".11"/><circle cx="294.500" cy="1680.500" r="40.500" fill="#ff7a33" fill-opacity=".11"/>';
s += '<path d="M75 1663L93 1680.500L75 1698M87.500 1663L105.500 1680.500L87.500 1698M276 1679V1663H293M276 1663L292 1677M297 1699H313V1684M313 1699L298 1685" fill="none" stroke="#e8590c" stroke-width="3.600"/>';
s += '<text x="245" y="1723" class="sig">S</text>';
document.getElementById('kline').innerHTML = s;

// Net fund flow per day, in units of 8.11万
const flow = [-84,-47,84,325,-127,-82,-39,-12,43,142,12,109,224,158,-91,20,-215,243,473,-428,192,-86,-200,-284,-113,-42,3,47,-88,-146,60,42,
-45,-56,-61,-86,-67,-60,-94,-4,-112,-53,-104,6,-33,-74,-54,-144,-88,-146,-102,-16,31,-47,-59,-24,24,-75,-52,-12,-76,40,-113,-4,-163,60,-169,91,
-26,25,-157,-188,-26,-193,-103,-156,-24,-205,-57,-85,29,-50,-24,28,43,-4,-118,-55,43,-107,-134,-84,-86,-4,-96,-70,16,-41,22,31,-75,-89,-12];
const FY = v => 1965.3 - v / 3;
let q = '<path d="M12.500 1808H1247.500V2108H12.500Z" fill="none" stroke="#dedede" stroke-width="1.600"/>';
q += '<text x="15" y="1855" class="axis sm" textLength="200">3834.00万</text><text x="15" y="2106" class="axis sm" textLength="218">-3472.00万</text>';
flow.forEach((v, i) => {
  const y = Math.min(FY(v), FY(0)), h = Math.max(Math.abs(v) / 3, 1);
  q += `<rect x="${f(X(i) - 5.5)}" y="${f(y)}" width="11" height="${f(h)}" fill="${v > 0 ? '#d02c2c' : '#00a000'}"/>`;
});
q += line(average(flow, 5, [3,-4,3,63]), FY, '#f2c31a', 1.1);
q += line(average(flow, 10, [9,2,9,34,21,17,14,8,11]), FY, '#c832c8', 1.1);
document.getElementById('flow').innerHTML = q;
```
